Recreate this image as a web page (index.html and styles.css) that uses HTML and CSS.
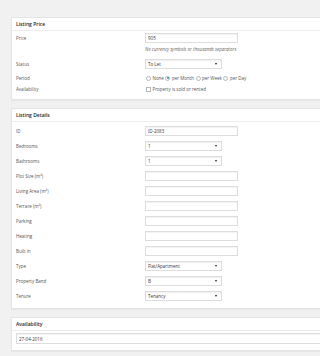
FILE: index.html
```html
<!DOCTYPE html>
<html>
<head>
<meta charset="utf-8">
<link rel="stylesheet" href="styles.css">
</head>
<body>
<div class="wrap">
  <div class="postbox">
    <h2 class="postbox-h">Listing Price</h2>
    <div class="inside inside-price">
      <div class="row">
        <span class="label">Price</span>
        <input class="text" type="text" value="905">
      </div>
      <p class="help">No currency symbols or thousands separators</p>
      <div class="row row-status">
        <span class="label">Status</span>
        <div class="select"><span>To Let</span><i class="arrow"></i></div>
      </div>
      <div class="row row-period">
        <span class="label">Period</span>
        <div class="radios">
          <label class="option"><span class="radio"></span><span class="rtext">None</span></label>
          <label class="option"><span class="radio checked"></span><span class="rtext">per Month</span></label>
          <label class="option"><span class="radio"></span><span class="rtext">per Week</span></label>
          <label class="option"><span class="radio"></span><span class="rtext">per Day</span></label>
        </div>
      </div>
      <div class="row row-avail">
        <span class="label">Availability</span>
        <label class="check"><span class="box"></span><span class="ctext">Property is sold or rented</span></label>
      </div>
    </div>
  </div>

  <div class="postbox">
    <h2 class="postbox-h">Listing Details</h2>
    <div class="inside inside-details">
      <div class="row"><span class="label">ID</span><input class="text" type="text" value="ID-2083"></div>
      <div class="row"><span class="label">Bedrooms</span><div class="select"><span>1</span><i class="arrow"></i></div></div>
      <div class="row"><span class="label">Bathrooms</span><div class="select"><span>1</span><i class="arrow"></i></div></div>
      <div class="row"><span class="label">Plot Size (m²)</span><input class="text" type="text" value=""></div>
      <div class="row"><span class="label">Living Area (m²)</span><input class="text" type="text" value=""></div>
      <div class="row"><span class="label">Terrace (m²)</span><input class="text" type="text" value=""></div>
      <div class="row"><span class="label">Parking</span><input class="text" type="text" value=""></div>
      <div class="row"><span class="label">Heating</span><input class="text" type="text" value=""></div>
      <div class="row"><span class="label">Built in</span><input class="text" type="text" value=""></div>
      <div class="row"><span class="label">Type</span><div class="select"><span>Flat/Apartment</span><i class="arrow"></i></div></div>
      <div class="row"><span class="label">Property Band</span><div class="select"><span>B</span><i class="arrow"></i></div></div>
      <div class="row"><span class="label">Tenure</span><div class="select"><span>Tenancy</span><i class="arrow"></i></div></div>
    </div>
  </div>

  <div class="postbox">
    <h2 class="postbox-h">Availability</h2>
    <div class="inside inside-avail">
      <input class="text date" type="text" value="27-04-2016">
    </div>
  </div>
</div>
</body>
</html>
```

FILE: styles.css
```css
html, body {
  margin: 0;
  padding: 0;
  overflow: hidden;
}
body {
  background: #f1f1f1;
  font-family: "Open Sans", "Noto Sans", sans-serif;
  color: #444;
  font-size: 4.5px;
  line-height: 1;
}
.wrap {
  height: 356px;
  overflow: hidden;
  box-sizing: border-box;
  padding: 17px 0 0 11px;
}
.postbox {
  width: calc(100% + 40px);
  background: #fff;
  border: 1px solid #e5e5e5;
  box-shadow: 0 1px 1px rgba(0,0,0,0.04);
  margin-bottom: 8px;
}
.postbox-h {
  margin: 0;
  height: 12px;
  line-height: 12px;
  padding-left: 4px;
  border-bottom: 1px solid #eee;
  font-size: 5px;
  font-weight: 600;
  color: #23282d;
}
.inside {
  padding-left: 4px;
}
.inside-price {
  padding-top: 2px;
  padding-bottom: 5px;
}
.inside-details {
  padding-top: 4px;
  padding-bottom: 7px;
}
.inside-details .row + .row {
  margin-top: 5px;
}
.inside-avail {
  padding-top: 2px;
  padding-bottom: 6px;
}
.row {
  display: flex;
  align-items: center;
  height: 10px;
}
.label {
  width: 129px;
  flex: none;
  font-size: 4.5px;
  line-height: 10px;
  color: #555;
}
.text {
  display: block;
  box-sizing: border-box;
  width: 93px;
  height: 10px;
  margin: 0;
  padding: 0 2px;
  border: 1px solid #ddd;
  box-shadow: inset 0 1px 1px rgba(0,0,0,0.05);
  font-family: "Open Sans", "Noto Sans", sans-serif;
  font-size: 4.5px;
  color: #32373c;
  outline: none;
  background: #fff;
}
.date {
  width: 100%;
  height: 11px;
}
.help {
  margin: 4px 0 0 129px;
  font-size: 4.5px;
  line-height: 5px;
  font-style: italic;
  color: #666;
}
.row-status {
  margin-top: 7px;
}
.row-period {
  margin-top: 4px;
}
.row-avail {
  margin-top: 1px;
}
.select {
  box-sizing: border-box;
  width: 77px;
  height: 10px;
  border: 1px solid #ddd;
  box-shadow: inset 0 1px 2px rgba(0,0,0,0.07);
  display: flex;
  align-items: center;
  justify-content: space-between;
  padding: 0 4px 0 2px;
  font-size: 4.5px;
  color: #32373c;
}
.arrow {
  width: 0;
  height: 0;
  border-left: 1px solid transparent;
  border-right: 1px solid transparent;
  border-top: 2px solid #222;
}
.radios {
  display: flex;
  align-items: center;
  height: 10px;
  white-space: nowrap;
  margin-left: 1px;
}
.option {
  display: flex;
  align-items: center;
  flex: none;
  margin-right: 1.5px;
}
.radio {
  box-sizing: border-box;
  width: 5px;
  height: 5px;
  border: 1px solid #b4b9be;
  border-radius: 50%;
  margin-right: 1.5px;
  flex: none;
  position: relative;
  background: #fff;
}
.radio.checked::after {
  content: "";
  position: absolute;
  left: 0.5px;
  top: 0.5px;
  width: 2px;
  height: 2px;
  border-radius: 50%;
  background: #1e8cbe;
}
.rtext {
  font-size: 4.5px;
  color: #555;
}
.check {
  display: flex;
  align-items: center;
  height: 10px;
  margin-left: 1px;
}
.box {
  box-sizing: border-box;
  width: 5px;
  height: 5px;
  border: 1px solid #b4b9be;
  margin-right: 1.5px;
}
.ctext {
  font-size: 4.5px;
  color: #555;
}
```
